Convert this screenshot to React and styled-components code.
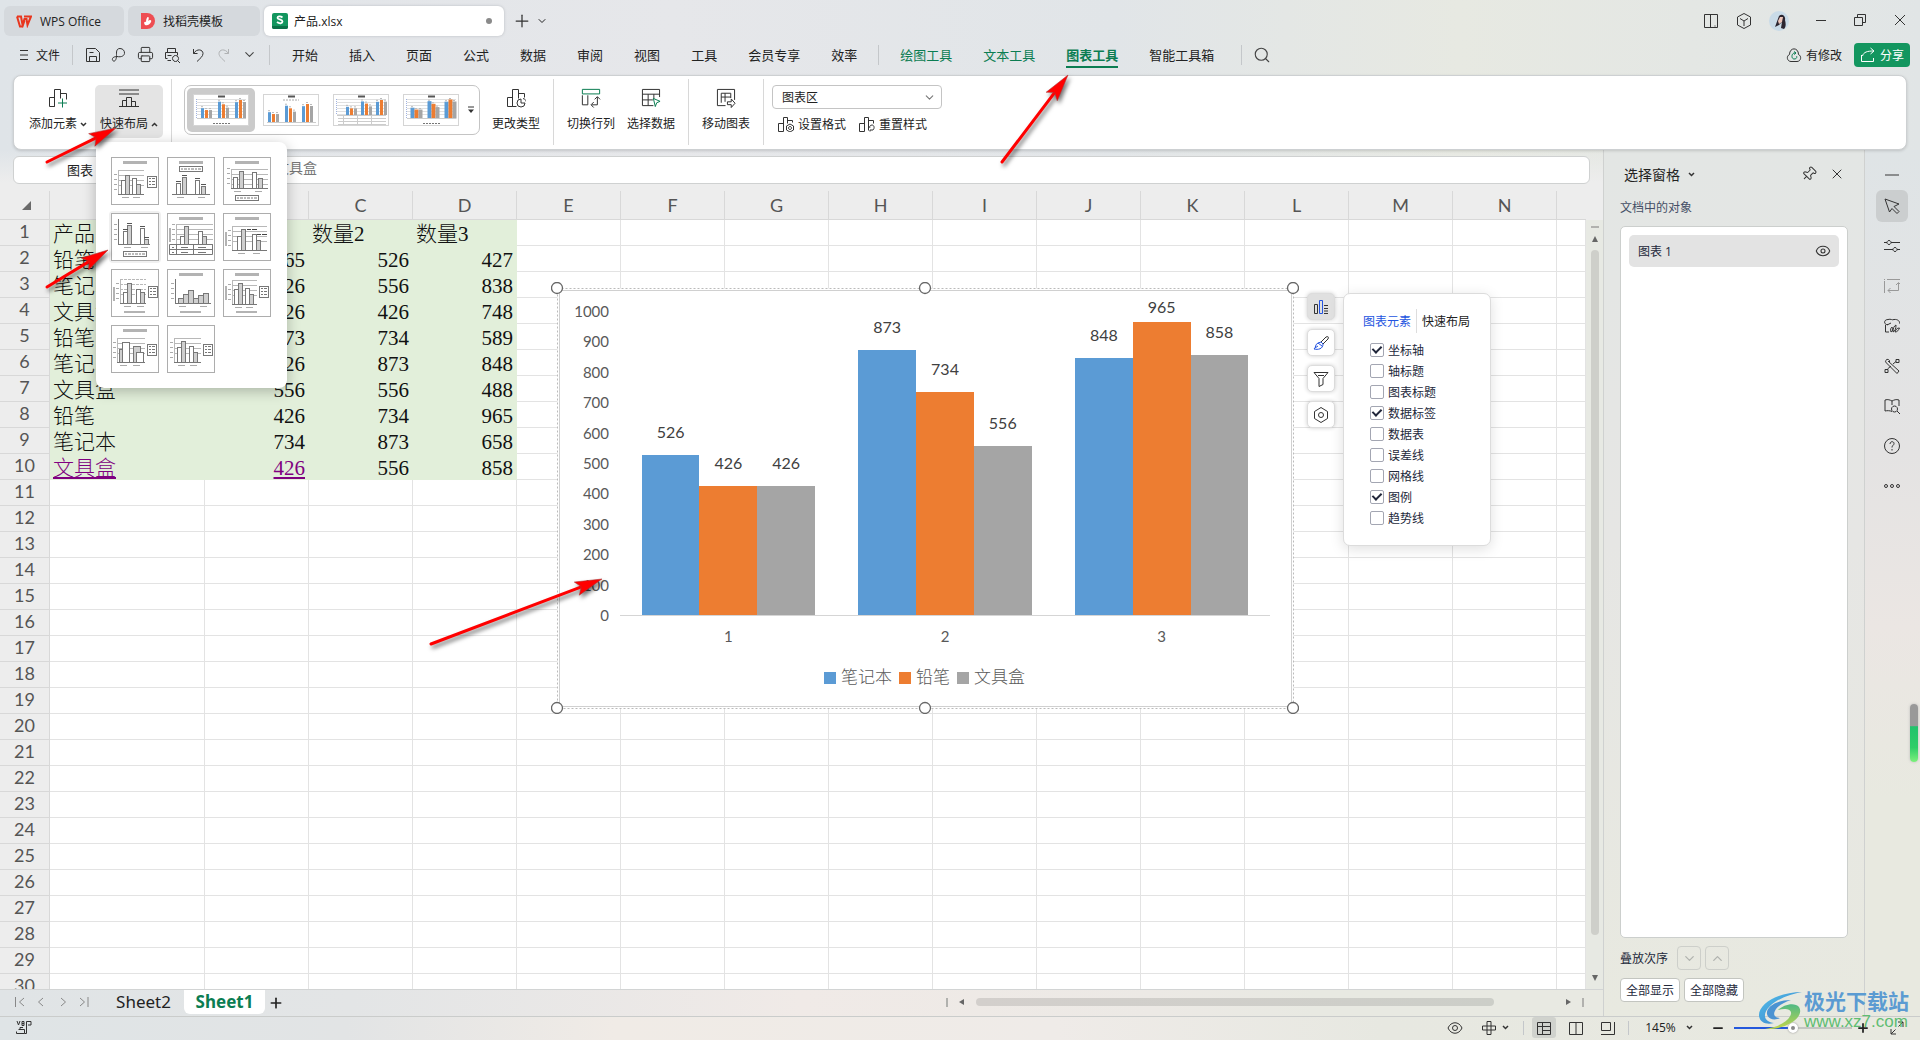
import React, { useState } from 'react'
import styled, { createGlobalStyle, css } from 'styled-components'
import { ChevronDown, ChevronUp, Minus, Plus, Search, X, Pin, Printer, Eye } from 'lucide-react'

const green = '#0b7d52'
const uiFont = '"Open Sans", "Noto Sans CJK SC", sans-serif'

const GlobalStyle = createGlobalStyle`
  * { box-sizing: border-box; }
  body { margin: 0; overflow: hidden; font-family: ${uiFont}; font-size: 12px; color: #222; }
  button, input, select { font: inherit; color: inherit; }
  svg { display: block; flex: none; }
`
const flexCenter = css`
  display: flex;
  align-items: center;
  justify-content: center;
`
const Page = styled.div`
  position: relative;
  display: flex;
  flex-direction: column;
  height: 100vh;
  background: linear-gradient(90deg, #dfe4e8, #e6e7ea 35%, #e1e5e8 58%, #e7e9e2 76%, #e1e5e6);
`
const Button = styled.button`
  ${flexCenter}
  flex: none;
  border: 0;
  padding: 0;
  background: none;
  white-space: nowrap;
`

/* title bar */
const TitleBar = styled.header`
  display: flex;
  align-items: center;
  height: 39px;
  padding: 6px 4px 3px;
  gap: 4px;
`
const FileTab = styled.button`
  display: flex;
  align-items: center;
  width: ${(props) => props.$width};
  height: 30px;
  gap: ${(props) => (props.$active ? '6px' : '8px')};
  border: 0;
  border-radius: 6px;
  padding: 0 ${(props) => (props.$active ? '12px 0 8px' : '12px')};
  background: ${(props) => (props.$active ? '#fff' : '#d5d9dd')};
  box-shadow: ${(props) => (props.$active ? '0 0 3px #b9bcc0' : 'none')};
`
const Dirty = styled.span`
  width: 6px;
  height: 6px;
  margin-left: auto;
  border-radius: 50%;
  background: #8a8a8a;
`
const NewTab = styled.div`
  ${flexCenter}
  gap: 4px;
  margin-left: 4px;
`
const WindowTools = styled.div`
  display: flex;
  align-items: center;
  margin-left: auto;
  padding-right: 10px;
  gap: 17px;
`

/* menu row */
const MenuBar = styled.nav`
  display: flex;
  align-items: center;
  height: 36px;
  padding: 0 10px 5px 19px;
`
const QuickTools = styled.div`
  display: flex;
  align-items: center;
  gap: 10px;
`
const FileButton = styled(Button)`
  gap: 7px;
`
const Rule = styled.span`
  flex: none;
  width: 1px;
  height: ${(props) => props.$height || '20px'};
  margin: ${(props) => props.$margin || '0'};
  background: ${(props) => props.$color || '#c4c7ca'};
`
const MenuItems = styled.div`
  display: flex;
  gap: 31px;
`
const MenuItem = styled(Button)`
  position: relative;
  height: 22px;
  font-size: 13px;
  font-weight: ${(props) => (props.$active ? 700 : 400)};
  color: ${(props) => (props.$green ? green : '#222')};
  ${(props) => props.$active && css`
    &::after {
      content: '';
      position: absolute;
      left: 0;
      right: 0;
      bottom: -2px;
      height: 2px;
      background: ${green};
    }
  `}
`
const SyncButton = styled(Button)`
  gap: 4px;
  margin: 0 12px 0 auto;
`
const ShareButton = styled(Button)`
  width: 56px;
  height: 24px;
  gap: 4px;
  border-radius: 4px;
  background: #13965f;
  color: #fff;
`

/* ribbon */
const Ribbon = styled.section`
  position: relative;
  z-index: 5;
  display: flex;
  align-items: flex-start;
  height: 75px;
  margin: 0 13px;
  padding: 9px 10px 0;
  border: 1px solid #cdd0d2;
  border-radius: 8px;
  background: #fff;
  box-shadow: 0 1px 3px rgba(0, 0, 0, 0.15);
`
const RibbonRule = styled(Rule)`
  height: 66px;
  margin: -6px ${(props) => props.$gap || '9px'} 0 9px;
  background: #d8d8d8;
`
const BigButton = styled(Button)`
  flex-direction: column;
  justify-content: flex-start;
  width: ${(props) => props.$width || '56px'};
  height: 53px;
  padding-top: 3px;
  gap: 8px;
  border-radius: 5px;
  background: ${(props) => (props.$active ? '#e4e4e4' : 'none')};
`
const Caption = styled.span`
  display: flex;
  align-items: center;
  gap: 3px;
  line-height: 16px;
`
const PickRow = styled.div`
  display: flex;
  gap: 4px;
`
const DropWrap = styled.div`
  position: relative;
  margin: 0 -1px 0 3px;
`
const LayoutMenu = styled.div`
  position: absolute;
  top: 57px;
  left: 1px;
  display: grid;
  grid-template-columns: repeat(3, 48px);
  gap: 8px;
  width: 191px;
  padding: 15px 15px 15px;
  border-radius: 8px;
  background: #fff;
  box-shadow: 0 3px 14px rgba(0, 0, 0, 0.25);
`
const LayoutTile = styled(Button)`
  width: 48px;
  height: 48px;
  border-radius: 2px;
  box-shadow: ${(props) => (props.$hover ? '0 0 0 2px #f0f0f0' : 'none')};
`
const LayoutMenuEnd = styled.div`
  height: 0;
`
const Gallery = styled.div`
  display: flex;
  align-items: center;
  width: 296px;
  height: 50px;
  margin: 0 8px 0 3px;
  padding: 2px;
  border: 1px solid #c4c4c4;
  border-radius: 7px;
`
const StyleTile = styled(Button)`
  width: 68px;
  height: 44px;
  margin-right: 2px;
  border-radius: 5px;
  background: ${(props) => (props.$active ? '#cbcbcb' : 'none')};
`
const FormatGroup = styled.div`
  display: flex;
  flex-direction: column;
  gap: 5px;
`
const SelectBox = styled.label`
  display: flex;
  align-items: center;
  width: 170px;
  height: 24px;
  padding: 0 5px 0 9px;
  border: 1px solid #c4c4c4;
  border-radius: 4px;
  select {
    flex: 1;
    appearance: none;
    border: 0;
    padding: 0;
    background: none;
  }
`
const SmallRow = styled.div`
  display: flex;
  gap: 13px;
  padding-left: 6px;
`
const SmallButton = styled(Button)`
  height: 20px;
  gap: 4px;
`

/* workspace */
const Workspace = styled.main`
  display: flex;
  flex: 1;
  min-height: 0;
`
const Book = styled.div`
  display: flex;
  flex: 1;
  flex-direction: column;
  min-width: 0;
`
const FormulaRow = styled.div`
  flex: none;
  height: 41px;
  padding: 6px 13px 7px;
  background: linear-gradient(transparent, #ededed 80%);
`
const FormulaBox = styled.div`
  display: flex;
  height: 28px;
  border: 1px solid #cfd1d1;
  border-radius: 6px;
  background: #fff;
`
const NameInput = styled.input`
  width: 261px;
  border: 0;
  padding: 0 0 2px 53px;
  background: none;
  font-size: 13px;
`
const FormulaInput = styled.input`
  flex: 1;
  border: 0;
  padding: 0 0 6px;
  background: none;
  color: #777;
  font-size: 14px;
`
const GridArea = styled.div`
  position: relative;
  display: flex;
  flex: 1;
  min-height: 0;
  overflow: hidden;
  border-bottom: 1px solid #d2d4d4;
  background: #ededed;
`
const SheetView = styled.div`
  flex: 1;
  min-width: 0;
  overflow: hidden;
`
const Table = styled.table`
  width: 100%;
  table-layout: fixed;
  border-collapse: separate;
  border-spacing: 0;
  background: #fff;
`
const HeadCell = styled.th`
  height: ${(props) => (props.$top ? '29px' : '26px')};
  padding: 0;
  border-right: 1px solid #d8d8d8;
  border-bottom: 1px solid #d8d8d8;
  background: #ededed;
  color: #555;
  font: 400 18px/22px Lato, sans-serif;
  ${(props) => props.$side && css`
    padding: 0 0 3px;
  `}
  &:last-child { border-right: ${(props) => (props.$top ? 0 : '1px solid #d8d8d8')}; }
`
const Cell = styled.td`
  height: 26px;
  padding: 2px 3px 0 3px;
  border-right: 1px solid ${(props) => (props.$filled ? '#e2efda' : '#e3e3e3')};
  border-bottom: 1px solid ${(props) => (props.$filled ? '#e2efda' : '#e3e3e3')};
  background: ${(props) => (props.$filled ? '#e2efda' : '#fff')};
  color: ${(props) => (props.$link ? '#800080' : '#111')};
  font: 21px/22px "Liberation Serif", "Noto Sans CJK SC", serif;
  font-weight: 300;
  text-align: ${(props) => (props.$num ? 'right' : 'left')};
  text-decoration: ${(props) => (props.$link ? 'underline 2px' : 'none')};
  text-underline-offset: 2px;
  white-space: nowrap;
`
const Corner = styled.span`
  display: block;
  width: 0;
  margin: 1px 0 0 22px;
  border-left: 9px solid transparent;
  border-bottom: 9px solid #6a6a6a;
`
const VScroll = styled.div`
  display: flex;
  flex-direction: column;
  align-items: center;
  width: 17px;
  margin-top: 29px;
  padding: 6px 0 7px;
  gap: 7px;
  background: #e7e9e3;
`
const Tick = styled.span`
  width: ${(props) => (props.$vertical ? '2px' : '8px')};
  height: ${(props) => (props.$vertical ? '9px' : '2px')};
  background: #b1b1ae;
`
const Thumb = styled.span`
  flex: 1;
  width: 8px;
  margin-bottom: 32px;
  border-radius: 4px;
  background: #cecfca;
`
const ChartFloat = styled.div`
  position: absolute;
  left: 551px;
  top: 91px;
`
const ChartTools = styled.div`
  position: absolute;
  left: 1307px;
  top: 102px;
  display: flex;
  flex-direction: column;
  gap: 9px;
`
const ChartTool = styled(Button)`
  width: 28px;
  height: 27px;
  border: 1px solid #ddd;
  border-radius: 5px;
  background: ${(props) => (props.$active ? '#e0e0e0' : '#fff')};
  box-shadow: 0 0 4px rgba(0, 0, 0, 0.2);
`
const ElementPanel = styled.div`
  position: absolute;
  left: 1343px;
  top: 102px;
  width: 148px;
  height: 253px;
  padding: 15px 19px;
  border: 1px solid #dcdcdc;
  border-radius: 7px;
  background: #fff;
  box-shadow: 0 3px 14px rgba(0, 0, 0, 0.13);
`
const PanelTabs = styled.div`
  display: flex;
  align-items: center;
  gap: 5px;
  margin-bottom: 6px;
`
const PanelTab = styled(Button)`
  color: ${(props) => (props.$active ? '#2454e0' : '#222')};
`
const CheckLabel = styled.label`
  display: flex;
  align-items: center;
  height: 21px;
  gap: 4px;
  padding-left: 7px;
  color: #23283a;
`
const Checkbox = styled.input.attrs({ type: 'checkbox' })`
  appearance: none;
  display: grid;
  place-content: center;
  width: 14px;
  height: 14px;
  margin: 0;
  border: 1px solid #a3a6b2;
  border-radius: 2px;
  background: #fff;
  &:checked::before {
    content: '';
    width: 4px;
    height: 7px;
    margin-top: -2px;
    border: solid #20263a;
    border-width: 0 2px 2px 0;
    transform: rotate(45deg);
  }
`
const SheetBar = styled.div`
  display: flex;
  align-items: center;
  flex: none;
  height: 26px;
  background: linear-gradient(90deg, #e0e4e6, #e3e5e6 22%, #f0eae7 50%, #ece9e5 72%, #e8e9e2 82%);
`
const SheetNav = styled.div`
  display: flex;
  width: 103px;
  padding: 0 0 2px 14px;
  gap: 9px;
`
const SheetTab = styled(Button)`
  align-self: flex-start;
  height: 24px;
  width: 81px;
  border-radius: 0 0 6px 6px;
  background: ${(props) => (props.$active ? '#fff' : 'none')};
  color: ${(props) => (props.$active ? green : '#222')};
  font: ${(props) => (props.$active ? 700 : 400)} 17px/22px "Noto Sans", sans-serif;
`
const HScroll = styled.div`
  display: flex;
  align-items: center;
  width: 657px;
  margin-left: auto;
  padding: 0 19px 2px 0;
  gap: 10px;
`
const HThumb = styled.span`
  flex: 1;
  height: 8px;
  margin-right: 60px;
  border-radius: 4px;
  background: linear-gradient(90deg, #d3cfcc, #cccec8);
`

/* selection pane */
const Pane = styled.aside`
  display: flex;
  flex-direction: column;
  width: 261px;
  padding: 12px 16px 14px 16px;
  border-left: 1px solid #cfd1d0;
  background: linear-gradient(#e3e6e4, #e6e6e4 45%, #e8e9e0);
`
const PaneTitle = styled.div`
  display: flex;
  align-items: center;
  height: 24px;
  padding: 0 3px 0 4px;
  gap: 8px;
  font-size: 14px;
`
const PaneTools = styled.div`
  display: flex;
  gap: 12px;
  margin-left: auto;
`
const PaneSub = styled.div`
  margin: 13px 0 9px;
  line-height: 18px;
  color: #454f66;
`
const ObjectList = styled.div`
  flex: 1;
  padding: 8px;
  border: 1px solid #cccfcd;
  border-radius: 5px;
  background: #fff;
`
const ObjectItem = styled.button`
  display: flex;
  align-items: center;
  justify-content: space-between;
  width: 100%;
  height: 32px;
  padding: 0 8px 0 9px;
  border: 0;
  border-radius: 5px;
  background: #e3e3e3;
  font-size: 12px;
  color: #23283a;
`
const PaneRow = styled.div`
  display: flex;
  align-items: center;
  gap: 4px;
  margin-top: 8px;
  color: #23283a;
`
const OrderButton = styled(Button)`
  width: 24px;
  height: 24px;
  border: 1px solid #cdcfca;
  border-radius: 4px;
  color: #b0b2ae;
`
const WhiteButton = styled(Button)`
  width: 60px;
  height: 24px;
  border: 1px solid #c3c5c0;
  border-radius: 4px;
  background: #fff;
`
const ToolRail = styled.aside`
  display: flex;
  flex-direction: column;
  align-items: center;
  width: 56px;
  padding: 24px 1px 0 0;
  border-left: 1px solid #cfd1d0;
  background: linear-gradient(#dfe4e6, #e4e3e3 35%, #ebe6e3 55%, #e8e9e0 75%);
`
const RailButton = styled(Button)`
  width: 32px;
  height: 32px;
  margin-top: 8px;
  border-radius: 6px;
  background: ${(props) => (props.$active ? '#cbcecf' : 'none')};
  &:first-of-type { margin-top: 14px; }
`
const Gauge = styled.span`
  position: absolute;
  right: 2px;
  top: 704px;
  width: 8px;
  height: 58px;
  border-radius: 4px;
  background: linear-gradient(#999 38%, #22c26c 39%, #2fce68 75%, #7df07c);
  box-shadow: 0 0 3px #bbb;
`

const StatusBar = styled.footer`
  display: flex;
  align-items: center;
  flex: none;
  height: 24px;
  padding: 0 11px 2px 16px;
  border-top: 1px solid #cacccb;
  background: linear-gradient(90deg, #dfe4e6, #e2e4e5 18%, #f0ebe6 32%, #efebe8 55%, #e7e8e1 72%, #e8e9e0);
`
const ViewTools = styled.div`
  display: flex;
  align-items: center;
  margin-left: auto;
`
const ViewButton = styled(Button)`
  width: ${(props) => props.$width || '24px'};
  height: 21px;
  gap: 5px;
  margin-right: ${(props) => props.$space || '8px'};
  border-radius: 3px;
  background: ${(props) => (props.$active ? '#d0d2cd' : 'none')};
`
const Zoom = styled(Button)`
  gap: 10px;
  width: 52px;
  margin-right: 16px;
`
const ZoomRange = styled.input.attrs({ type: 'range' })`
  appearance: none;
  width: 118px;
  height: 10px;
  margin: 0 4px 0 9px;
  background: linear-gradient(90deg, #2458dc 51%, #c3c5c1 51%) center / 100% 2px no-repeat;
  &::-webkit-slider-thumb {
    appearance: none;
    width: 10px;
    height: 10px;
    border: 3px solid #fff;
    border-radius: 50%;
    background: #888;
    box-shadow: 0 0 2px #888;
  }
`
const Watermark = styled.div`
  position: absolute;
  right: 11px;
  bottom: 6px;
  display: flex;
  align-items: center;
  gap: 0;
  pointer-events: none;
`
const MarkText = styled.div`
  color: #5b9bd2;
  font: 700 21px/24px "Noto Sans CJK SC", sans-serif;
  margin-bottom: 2px;
  span {
    display: block;
    color: #5fbd72;
    font: 17px/20px "Liberation Sans", sans-serif;
  }
`
const Arrows = styled.svg`
  position: absolute;
  inset: 0;
  z-index: 10;
  width: 100%;
  height: 100%;
  pointer-events: none;
  filter: drop-shadow(2px 3px 2px rgba(0, 0, 0, 0.55));
`

function Icon({ d, size = 16, box = 16, color = '#333', accent, accentColor = green, children }) {
  return (
    <svg width={size} height={size} viewBox={`0 0 ${box} ${box}`} fill="none" stroke={color} strokeWidth={box / size}>
      {d && <path d={d} />}
      {accent && <path d={accent} stroke={accentColor} />}
      {children}
    </svg>
  )
}

const Caret = ({ up }) => (
  <svg width="7" height="5" fill="none" stroke="#333" strokeWidth="1.5">
    <path d={up ? 'M1 4l2.5-2.5L6 4' : 'M1 1l2.5 2.5L6 1'} />
  </svg>
)
const Triangle = ({ dir }) => {
  const paths = { up: 'M1 7l3-6 3 6z', down: 'M1 1l3 6 3-6z', left: 'M6 1v6L1 4z', right: 'M2 1v6l5-3z' }
  return <svg width="8" height="8" fill="#666"><path d={paths[dir]} /></svg>
}

const icons = {
  save: 'M1.5 14.5v-13h9l4 4v9zM4.5 14.5v-5h7v5M4.5 5.5h4',
  pdf: 'M6 9.500c10 2 9-8 3-8-4 0-3.500 4-3.500 7 0 8-5 6-4 3 .5-1.500 3-2 4.500-2',
  preview: 'M3.500 5V1.500h8V5M7 13.500H3.500M3.500 11.500h-2v-6h12v3M3.500 8.500h4M14 14l2 2M11.500 8.500a3 3 0 1 0 .01 0',
  undo: 'M3.500 2v4.500h4M3.500 6.500C7 1 13 2.500 13 6.500c0 3-3 5-6 8',
  redo: 'M12.500 2v4.500h-4M12.500 6.500C9 1 3 2.500 3 6.500c0 3 3 5 6 8',
  addChart: 'M1.500 9.500v9h5v-9zM6.500 18.500v-17h6v9M12.500 5.500h6v6',
  layout: 'M0 2h20M0 6h20M0 18.500h20M3.500 18.500v-6h4v6M7.500 18.500v-9h5v9M12.500 13.500h4v5',
  typeChart: 'M1.500 9.500v9h5v-9zM6.500 18.500v-17h6v9M6.500 18.500h4M12.500 5.500h6v4',
  swap: 'M1.500 8v10.500h6V8M12 18.500h6V10M15 12.500l3-3 3 3M14 15.500l-3 3 3 3',
  data: 'M13 18.500H1.500v-17h18v8M1.500 6.500h18M1.500 12.500h11M7.500 6.500v12M13.500 6.500v5',
  move: 'M10 18.500H1.500v-17h18v11M5.500 15.500v-10h10v5M5.500 9.500h10M9.500 5.500v9M12 14.500h4v-3l4 4.500-4 4.500v-3h-4z',
  cursor: 'M1 1l14 5-5 2.500 5 5-2 2-5-5L5.500 14z',
  sliders: 'M0 4.500h3M7 4.500h9M0 11.500h9M13 11.500h3M5 2.500a2 2 0 1 0 .01 0M11 9.500a2 2 0 1 0 .01 0',
  swapRail: 'M.5 15V3M0 1.500h1M3 1.500h13M4 12.500h10.500V5M12 7l2.500-2.500L17 7M6.500 10L4 12.500 6.500 15',
  media: 'M4 6.500c-4 1-5-5 0-5 3-1 4 1 6 0 4-.5 6 2 5.500 4M1.500 7v7H5M3 7l4-2M7 14c-1-3 0-4 1-5 1 2 1 4-1 5M9 14c0-4 1-6 3-7 0 4-1 6-3 7M11 14c1-3 2-4 4.500-4-1 2-2 4-4.500 4',
  tools: 'M4 3l11 10-2 2.500L2.500 5a2 2 0 1 1 3 -1M1 11.500h3v3H1zM3.500 11L7 8M9 6l3-2.500M12 1.500h3v3h-3z',
  book: 'M8 13.500c-2-1-5-1-7-.500v-11c3-1 5 0 7 1 2-1 4-2 7-1v6M8 3v4M10.500 8a3 3 0 1 0 .01 0M13 13l3 3',
}

const Logo = ({ kind }) => {
  if (kind === 'wps') {
    return (
      <svg width="16" height="13" viewBox="0 0 16 13" fill="none" stroke="#e8361e" strokeWidth="2">
        <path d="M1 1.500h4l1.500 8L8.500 4h2l1 6L15 1.500H8M1 1.500L4 11.500h2.500l2-6" />
      </svg>
    )
  }
  if (kind === 'docer') {
    return (
      <svg width="15" height="16" viewBox="0 0 15 16">
        <path d="M1 0h6a8 8 0 0 1 0 16H1z" fill="#ee4d52" />
        <path d="M5 12c-2-3 0-4 1-3 0-3 1-5 2-5s1 2 0 4c2-2 4-1 3 1s-3 4-6 3z" fill="#fff" />
      </svg>
    )
  }
  return (
    <svg width="16" height="16" viewBox="0 0 16 16">
      <rect width="16" height="16" rx="2" fill="#13965f" />
      <path d="M0 13h16v1a2 2 0 0 1-2 2H2a2 2 0 0 1-2-2z" fill="#0b7048" />
      <path d="M10.500 4.500C8 2.500 5.500 3.500 5.500 5s5 1.500 5 3.500-3 2.500-5.500.500" stroke="#fff" strokeWidth="1.800" fill="none" />
    </svg>
  )
}

/* x, y, width, shaded - measured in the 48px tile */
const layouts = [
  { title: 1, grid: [7, 13, 33], base: 37, bars: [[10, 23, 4], [14, 18, 4, 1], [21, 21, 4], [25, 27, 4, 1]], legend: [36, 19] },
  { title: 1, base: 37, baseX: [5, 43], bars: [[9, 26, 4], [15, 20, 4, 1], [28, 23, 4], [34, 29, 4, 1]], keys: 9, labels: 1 },
  { title: 1, grid: [8, 12, 45], base: 31, bars: [[10, 20, 4], [16, 14, 4, 1], [29, 15, 4], [35, 21, 4, 1]], keys: 38 },
  { axis: 7, axisY: 6, base: 31, baseX: [7, 39], bars: [[12, 18, 4], [16, 12, 4, 1], [29, 15, 4], [33, 26, 4, 1]], keys: 38, labels: 1 },
  { title: 1, grid: [9, 11, 46], side: 15, base: 31, bars: [[13, 23, 4], [17, 13, 4, 1], [31, 18, 4], [35, 23, 4, 1]], table: 1 },
  { title: 1, grid: [9, 13, 44], side: 19, base: 37, bars: [[14, 23, 4], [18, 16, 4, 1], [29, 21, 4], [33, 27, 4, 1]], notes: 1 },
  { grid: [9, 10, 35], dashed: 1, side: 18, base: 34, bars: [[12, 23, 4], [16, 14, 4, 1], [25, 20, 4], [29, 23, 4, 1]], legend: [37, 17], foot: 1 },
  { title: 1, axis: 8, axisY: 10, base: 34, baseX: [8, 44], bars: [[11, 29, 5, 1], [16, 25, 5, 1], [21, 21, 5, 1], [26, 29, 5, 1], [31, 26, 5, 1], [36, 24, 5, 1]], foot: 1 },
  { title: 1, grid: [9, 11, 34], side: 17, base: 35, bars: [[11, 20, 4], [15, 14, 4, 1], [22, 19, 4], [26, 25, 4, 1]], legend: [36, 17], foot: 1 },
  { title: 1, grid: [6, 13, 34], base: 37, bars: [[8, 24, 4, 1], [11, 17, 7], [22, 21, 7, 1], [25, 27, 7]], legend: [36, 19] },
  { grid: [7, 13, 34], base: 37, bars: [[10, 22, 4], [14, 16, 4, 1], [22, 21, 4], [26, 27, 4, 1]], legend: [36, 19] },
]

function LayoutIcon({ item }) {
  const { grid, bars, base, legend } = item
  const first = bars[0][0]
  const last = bars[bars.length - 1][0]
  const [bx1, bx2] = item.baseX || [grid[0], grid[2]]
  const rows = grid ? [0, 1, 2, 3].map((i) => grid[1] + 0.5 + i * 5) : []
  return (
    <svg width="48" height="48" fill="none" stroke="#777">
      <rect x=".5" y=".5" width="47" height="47" fill="#fff" stroke="#adadad" />
      {item.title && <rect x="12" y="4" width="24" height="3" fill="#b3b3b3" stroke="none" />}
      {rows.map((y) => <path key={y} d={`M${grid[0]} ${y}H${grid[2]}`} stroke="#b8b8b8" strokeDasharray={item.dashed ? '3 1' : 'none'} />)}
      {grid && <path d={`M${grid[0] + 0.5} ${grid[1]}V${base}`} stroke="#b8b8b8" />}
      {item.axis && <path d={`M${item.axis + 0.5} ${item.axisY}V${base}`} />}
      {(grid || item.axis) && [4, 9, 14, 19].map((o) => (
        <path key={o} d={`M${bx1 - 4} ${base - o - 0.5}h3`} stroke="#aaa" />
      ))}
      {item.side && <rect x="2" y={item.side} width="2" height="14" fill="#b3b3b3" stroke="none" />}
      {bars.map(([x, y, w, dark]) => (
        <rect key={x} x={x + 0.5} y={y + 0.5} width={w} height={base - y} fill={dark ? '#cfcfcf' : '#fff'} />
      ))}
      {item.labels && bars.map(([x, y]) => <path key={x} d={`M${x} ${y - 1.5}h5`} stroke="#555" />)}
      {item.notes && <path d="M24 16.500h4M29 16.500h5M34 21.500h4M39 21.500h5" stroke="#444" />}
      <path d={`M${bx1} ${base + 0.5}H${bx2}`} />
      {!item.table && <path d={`M${first + 1} ${base + 3.5}h7M${last - 3} ${base + 3.5}h7`} stroke="#aaa" />}
      {item.table && <path d="M2.500 31.500h43v10h-43zM2.500 36.500h43M9.500 31.500v10M26.500 31.500v10M5 34.500h2M5 39.500h2M14 34.500h7M31 34.500h8M14 39.500h7M31 39.500h8" fill="#fff" />}
      {item.foot && <rect x="13" y="42" width="21" height="2" fill="#b3b3b3" stroke="none" />}
      {item.keys && (
        <g>
          <rect x="12.500" y={item.keys + 0.5} width="23" height="5" fill="#fff" />
          <path d={`M14 ${item.keys + 3}h20`} strokeDasharray="2 1 3 1" />
        </g>
      )}
      {legend && (
        <g>
          <rect x={legend[0] + 0.5} y={legend[1] + 0.5} width="9" height="11" fill="#fff" />
          {[2, 5, 8].map((o) => <path key={o} d={`M${legend[0] + 2} ${legend[1] + o + 0.5}h2m1 0h3`} />)}
        </g>
      )}
    </svg>
  )
}

const series = [
  { name: '笔记本', color: '#5b9bd5', values: [526, 873, 848], keyX: 273 },
  { name: '铅笔', color: '#ed7d31', values: [426, 734, 965], keyX: 348 },
  { name: '文具盒', color: '#a5a5a5', values: [426, 556, 858], keyX: 406 },
]

function StyleThumb({ kind }) {
  const base = [24, 28, 21, 24][kind]
  const scale = [18, 18, 15, 18][kind] / 965
  const left = kind === 1 ? 5 : kind === 2 ? 13 : 8
  const step = kind === 2 ? 15 : 17
  return (
    <svg width="56" height="32" fill="none">
      <rect x=".5" y=".5" width="55" height="31" fill="#fff" stroke="#d5d5d5" />
      <path d="M25 2.500h7" stroke="#555" strokeWidth="2" />
      {kind === 1 ? <path d="M20 6h16" stroke="#aaa" strokeDasharray="2 1" /> : (
        [5, 8, 11, 14, 17, 20].map((y) => <path key={y} d={`M4 ${y + 0.5}h49`} stroke="#e0e0e0" />)
      )}
      {kind !== 1 && <path d={`M3.500 5v${base - 5}`} stroke="#9fb2e0" strokeDasharray="1 1" />}
      {series.map((s, i) => s.values.map((v, g) => (
        <g key={s.name + g}>
          <rect x={left + g * step + i * 4} y={base - v * scale} width={3} height={v * scale} fill={s.color} stroke={kind === 3 ? s.color : 'none'} />
          <path d={`M${left + g * step + i * 4} ${base - v * scale - 1.5}h2`} stroke="#bbb" />
        </g>
      )))}
      <path d={`M4 ${base + 0.5}h49`} stroke="#ccc" />
      {kind === 2 && <path d="M5 24.500h48M5 27.500h48M5 30.500h48M10.500 22v9M24.500 22v9M38.500 22v9" stroke="#ccc" />}
      {(kind === 0 || kind === 3) && <path d="M20 29.500h17" stroke="#777" strokeDasharray="2 1" />}
    </svg>
  )
}

function Chart() {
  const base = 333
  const unit = 0.3036
  const group = 650 / 3
  const bar = group / 3.75
  const font = 'Lato, "Noto Sans CJK SC", sans-serif'
  return (
    <svg width="748" height="432" fontFamily={font} fill="#595959">
      <rect x="6.500" y="6.500" width="736" height="420" fill="#fff" stroke="#bbb" strokeDasharray="2 2" />
      <rect x="8.500" y="8.500" width="732" height="416" fill="#fff" stroke="#d0d0d0" />
      {[...Array(11)].map((_, i) => (
        <text key={i} x="58" y={339 - i * 30.4} fontSize="15" textAnchor="end">{i * 100}</text>
      ))}
      {series.map((s, i) => s.values.map((v, g) => {
        const x = 69 + g * group + group / 2 + (i - 1.5) * bar
        return (
          <g key={s.name + g}>
            <rect x={Math.round(x)} y={Math.round(base - v * unit)} width={Math.round(x + bar) - Math.round(x)} height={Math.round(v * unit)} fill={s.color} />
            <text x={x + bar / 2} y={Math.max(31, base - v * unit - 17)} fontSize="16" textAnchor="middle" fill="#404040">{v}</text>
          </g>
        )
      }))}
      <path d="M69 333.500h650" stroke="#d5d5d5" />
      {[1, 2, 3].map((n) => (
        <text key={n} x={69 + group * (n - 0.5)} y="360" fontSize="15" textAnchor="middle">{n}</text>
      ))}
      {series.map((s) => (
        <g key={s.name}>
          <rect x={s.keyX} y="390" width="12" height="12" fill={s.color} />
          <text x={s.keyX + 17} y="401" fontSize="17" fontWeight="300">{s.name}</text>
        </g>
      ))}
      {[[6, 6], [374, 6], [742, 6], [6, 426], [374, 426], [742, 426]].map(([x, y]) => (
        <circle key={`${x}-${y}`} cx={x} cy={y} r="5.500" fill="#fff" stroke="#666" strokeWidth="1.300" />
      ))}
    </svg>
  )
}

const columns = 'ABCDEFGHIJKLMN'.split('')
const rows = [
  ['产品', '数量1', '数量2', '数量3'],
  ['铅笔', 965, 526, 427],
  ['笔记本', 526, 556, 838],
  ['文具盒', 426, 426, 748],
  ['铅笔', 873, 734, 589],
  ['笔记本', 526, 873, 848],
  ['文具盒', 556, 556, 488],
  ['铅笔', 426, 734, 965],
  ['笔记本', 734, 873, 658],
  ['文具盒', 426, 556, 858],
]

function Sheet() {
  return (
    <Table>
      <colgroup>
        <col style={{ width: 50 }} />
        {columns.map((c, i) => <col key={c} style={{ width: i === 0 ? 155 : 104 }} />)}
        <col />
      </colgroup>
      <thead>
        <tr>
          <HeadCell $top><Corner /></HeadCell>
          {columns.map((c) => <HeadCell $top key={c}>{c}</HeadCell>)}
          <HeadCell $top />
        </tr>
      </thead>
      <tbody>
        {[...Array(30)].map((_, r) => (
          <tr key={r}>
            <HeadCell as="th" scope="row" $side>{r + 1}</HeadCell>
            {[...Array(15)].map((_, c) => {
              const value = rows[r] && rows[r][c]
              return (
                <Cell key={c} $filled={r < 10 && c < 4} $num={typeof value === 'number'} $link={r === 9 && c < 2}>
                  {value}
                </Cell>
              )
            })}
          </tr>
        ))}
      </tbody>
    </Table>
  )
}

const elements = ['坐标轴', '轴标题', '图表标题', '数据标签', '数据表', '误差线', '网格线', '图例', '趋势线']

function ChartElements() {
  const [checked, setChecked] = useState(['坐标轴', '数据标签', '图例'])
  const toggle = (name) => {
    setChecked(checked.includes(name) ? checked.filter((n) => n !== name) : [...checked, name])
  }
  return (
    <ElementPanel>
      <PanelTabs>
        <PanelTab $active>图表元素</PanelTab>
        <Rule $height="24px" $color="#ddd" />
        <PanelTab>快速布局</PanelTab>
      </PanelTabs>
      {elements.map((name) => (
        <CheckLabel key={name}>
          <Checkbox checked={checked.includes(name)} onChange={() => toggle(name)} />
          {name}
        </CheckLabel>
      ))}
    </ElementPanel>
  )
}

const Arrow = ({ from, to }) => {
  const [x1, y1] = from
  const [x2, y2] = to
  const length = Math.hypot(x2 - x1, y2 - y1)
  const angle = Math.atan2(y2 - y1, x2 - x1) * 180 / Math.PI
  return (
    <g transform={`translate(${x2} ${y2}) rotate(${angle})`}>
      <path d={`M${-length} 0H-20`} stroke="#f00" strokeWidth="3" strokeLinecap="round" />
      <path d="M0 0L-27 -7L-22 0L-27 7Z" fill="#f00" stroke="#a33" strokeWidth=".5" />
    </g>
  )
}

const menus = ['开始', '插入', '页面', '公式', '数据', '审阅', '视图', '工具', '会员专享', '效率']
const toolMenus = ['绘图工具', '文本工具', '图表工具', '智能工具箱']

function Header() {
  return (
    <>
      <TitleBar>
        <FileTab $width="120px"><Logo kind="wps" />WPS Office</FileTab>
        <FileTab $width="132px"><Logo kind="docer" />找稻壳模板</FileTab>
        <FileTab $width="240px" $active><Logo />产品.xlsx<Dirty /></FileTab>
        <NewTab>
          <Button aria-label="新建"><Plus size={20} strokeWidth={1.5} color="#333" /></Button>
          <Button aria-label="标签列表"><ChevronDown size={12} /></Button>
        </NewTab>
        <WindowTools>
          <Button aria-label="分屏"><Icon d="M1.500 1.500h13v13h-13zM7.500 1.500v13M12 12.500v1" /></Button>
          <Button aria-label="工作台"><Icon d="M8 .5l6.500 3.500v8L8 15.500 1.500 12V4zM4 5.500l4 2.500 4-2.500M8 8v5" /></Button>
          <Button aria-label="账户">
            <svg width="20" height="20" viewBox="0 0 20 20">
              <circle cx="10" cy="10" r="10" fill="#c9dbe8" />
              <path d="M10 5c3-3 7 0 6 4 1 4 1 7-1 9l-3-1 1-6-3 3-4 2z" fill="#2b2530" />
              <path d="M11 6l3 0-1 5-3 2-1-3z" fill="#edc6bb" />
            </svg>
          </Button>
          <Button aria-label="最小化"><Icon size={22} box={22} d="M10 10.500h10" /></Button>
          <Button aria-label="还原"><Icon size={22} box={22} d="M9.500 7.500h8v8h-8zM12.500 7V4.500h8v8H18" /></Button>
          <Button aria-label="关闭"><Icon size={22} box={22} d="M11 5l10 10M21 5L11 15" /></Button>
        </WindowTools>
      </TitleBar>
      <MenuBar>
        <FileButton><Icon size={10} box={10} d="M1 .5h8M1 5h8M1 9.500h8" />文件</FileButton>
        <Rule $margin="0 12px" />
        <QuickTools>
          <Button aria-label="保存"><Icon d={icons.save} /></Button>
          <Button aria-label="输出PDF"><Icon d={icons.pdf} /></Button>
          <Button aria-label="打印"><Printer size={17} strokeWidth={1.4} color="#333" /></Button>
          <Button aria-label="打印预览"><Icon d={icons.preview} /></Button>
          <Button aria-label="撤销"><Icon d={icons.undo} /></Button>
          <Button aria-label="恢复"><Icon d={icons.redo} color="#b0b2b4" /></Button>
          <Button aria-label="更多"><ChevronDown size={15} strokeWidth={1.7} color="#444" /></Button>
        </QuickTools>
        <Rule $margin="0 22px 0 12px" />
        <MenuItems>{menus.map((m) => <MenuItem key={m}>{m}</MenuItem>)}</MenuItems>
        <Rule $margin="0 21px" />
        <MenuItems>
          {toolMenus.map((m, i) => <MenuItem key={m} $green={i < 3} $active={i === 2}>{m}</MenuItem>)}
        </MenuItems>
        <Rule $margin="0 11px 0 27px" />
        <Button aria-label="搜索"><Search size={18} strokeWidth={1.5} color="#444" /></Button>
        <SyncButton>
          <Icon d="M5 14.500C1 14.500 0 9 3.500 7.500 3.500 0 12.500 0 12.500 7.500 16 9 15 14.500 11 14.500z" accent="M8 4.500l2 1.500-2 1.500M10 6c-5-1-5 6-2 6s3-2 2.500-3" />
          有修改
        </SyncButton>
        <ShareButton>
          <Icon color="#fff" d="M1.500 8v6.500h12V11M2.500 9c1-4 5-5 11-5M10.500 1l3.500 3-3.500 3" />
          分享
        </ShareButton>
      </MenuBar>
    </>
  )
}

function Toolbar() {
  return (
    <Ribbon>
      <BigButton $width="68px">
        <Icon size={20} box={20} d={icons.addChart} accent="M10 15h9M14.500 10.500v9" />
        <Caption>添加元素 <Caret /></Caption>
      </BigButton>
      <DropWrap>
        <BigButton $width="68px" $active>
          <Icon size={20} box={20} d={icons.layout} />
          <Caption>快速布局 <Caret up /></Caption>
        </BigButton>
        <LayoutMenu>
          {layouts.map((item, i) => (
            <LayoutTile key={i} $hover={i === 3} aria-label={`布局 ${i + 1}`}><LayoutIcon item={item} /></LayoutTile>
          ))}
          <LayoutMenuEnd />
        </LayoutMenu>
      </DropWrap>
      <RibbonRule />
      <Gallery>
        {[0, 1, 2, 3].map((k) => (
          <StyleTile key={k} $active={k === 0} aria-label={`样式 ${k + 1}`}><StyleThumb kind={k} /></StyleTile>
        ))}
        <Button aria-label="更多样式">
          <svg width="8" height="8"><path d="M1 1h6" stroke="#333" /><path d="M1 3.500h6L4 7z" fill="#333" /></svg>
        </Button>
      </Gallery>
      <BigButton>
        <Icon size={20} box={20} d={icons.typeChart}><path d="M15 11a4 4 0 1 0 4 4h-4zM17 10.500c2 .5 3 1.500 3 3" /></Icon>
        <Caption>更改类型</Caption>
      </BigButton>
      <RibbonRule />
      <PickRow>
        <BigButton>
          <Icon size={20} box={22} d={icons.swap} accent="M1.500 1.500h19v5h-19z" />
          <Caption>切换行列</Caption>
        </BigButton>
        <BigButton>
          <Icon size={20} box={21} d={icons.data} accent="M13 11l7 3-3.500 1.500L15 19.500z" />
          <Caption>选择数据</Caption>
        </BigButton>
      </PickRow>
      <RibbonRule />
      <BigButton>
        <Icon size={20} box={21} d={icons.move} />
        <Caption>移动图表</Caption>
      </BigButton>
      <RibbonRule $gap="8px" />
      <FormatGroup>
        <SelectBox>
          <select aria-label="图表区域"><option>图表区</option></select>
          <ChevronDown size={13} strokeWidth={2} color="#777" />
        </SelectBox>
        <SmallRow>
          <SmallButton>
            <Icon d="M.5 7.500v8h5v-8zM5.500 15V1.500h4v6M9.500 4.500h5v2M12 8l3.500 2v4L12 16l-3.500-2v-4zM12 10.500a1.500 1.500 0 1 0 .01 0" />
            设置格式
          </SmallButton>
          <SmallButton>
            <Icon d="M.5 7.500v8h5v-8zM5.500 15V1.500h4v13M9.500 4.500h5v3M11 15.500V14h3c2-2 1-5-1-5s-3 2-2 3" />
            重置样式
          </SmallButton>
        </SmallRow>
      </FormatGroup>
    </Ribbon>
  )
}

function SelectionPane() {
  return (
    <Pane>
      <PaneTitle>
        选择窗格 <Caret />
        <PaneTools>
          <Button aria-label="固定窗格"><Pin size={16} strokeWidth={1.5} color="#333" transform="rotate(45)" /></Button>
          <Button aria-label="关闭窗格"><X size={16} strokeWidth={1.5} color="#333" /></Button>
        </PaneTools>
      </PaneTitle>
      <PaneSub>文档中的对象</PaneSub>
      <ObjectList>
        <ObjectItem>图表 1 <Eye size={16} strokeWidth={1.6} color="#333" /></ObjectItem>
      </ObjectList>
      <PaneRow>
        叠放次序
        <Rule $height="1px" $color="none" />
        <OrderButton aria-label="下移"><ChevronDown size={15} /></OrderButton>
        <OrderButton aria-label="上移"><ChevronUp size={15} /></OrderButton>
      </PaneRow>
      <PaneRow>
        <WhiteButton>全部显示</WhiteButton>
        <WhiteButton>全部隐藏</WhiteButton>
      </PaneRow>
    </Pane>
  )
}

function Rail() {
  return (
    <ToolRail>
      <svg width="14" height="2"><path d="M0 1h14" stroke="#8b8d8e" strokeWidth="2" /></svg>
      <RailButton $active aria-label="选择"><Icon d={icons.cursor} /></RailButton>
      <RailButton aria-label="属性"><Icon d={icons.sliders} /></RailButton>
      <RailButton aria-label="转换"><Icon d={icons.swapRail} color="#999" /></RailButton>
      <RailButton aria-label="素材"><Icon d={icons.media} /></RailButton>
      <RailButton aria-label="工具"><Icon d={icons.tools} /></RailButton>
      <RailButton aria-label="查阅"><Icon d={icons.book} /></RailButton>
      <RailButton aria-label="帮助">
        <Icon d="M6 6c0-3 4-3 4-.5C10 7.500 8 7 8 9.500M8 11v1.500"><circle cx="8" cy="8" r="7.500" /></Icon>
      </RailButton>
      <RailButton aria-label="更多">
        <Icon>{[2, 8, 14].map((x) => <circle key={x} cx={x} cy="8" r="1.500" />)}</Icon>
      </RailButton>
    </ToolRail>
  )
}

const App = () => {
  const [zoom, setZoom] = useState(145)
  return (
    <Page>
      <GlobalStyle />
      <Header />
      <Toolbar />
      <Workspace>
        <Book>
          <FormulaRow>
            <FormulaBox>
              <NameInput aria-label="名称框" defaultValue="图表 1" />
              <FormulaInput aria-label="编辑栏" defaultValue="文具盒" />
            </FormulaBox>
          </FormulaRow>
          <GridArea>
            <SheetView><Sheet /></SheetView>
            <VScroll><Tick /><Triangle dir="up" /><Thumb /><Triangle dir="down" /></VScroll>
            <ChartFloat><Chart /></ChartFloat>
            <ChartTools>
              <ChartTool $active aria-label="图表元素">
                <Icon d="M1.500 5.500h3v9h-3zM11 6.500h4M11 9.500h4M11 12h4M11 14.500h4" accent="M6.500 1.500h3v13h-3z" accentColor="#2454e0" />
              </ChartTool>
              <ChartTool aria-label="图表样式">
                <Icon d="M8 7l5-5c2-1 3 0 2 2l-5 5" accent="M1 14c2-1 1-5 4-6l3-1 2 2c0 5-5 6-9 5zM5 8l4 3M2 13l3-2" accentColor="#2454e0" />
              </ChartTool>
              <ChartTool aria-label="筛选"><Icon d="M1 1.500h14l-5 6v6l-4 2v-8zM5 4.500h6" /></ChartTool>
              <ChartTool aria-label="设置"><Icon d="M8 .5l6.500 4v7L8 15.500l-6.500-4v-7z"><circle cx="8" cy="8" r="2.500" /></Icon></ChartTool>
            </ChartTools>
            <ChartElements />
          </GridArea>
          <SheetBar>
            <SheetNav>
              <Icon size={12} box={12} color="#888" d="M1.500 1v10M10 2L5.500 6l4.500 4" />
              <Icon size={12} box={12} color="#888" d="M8 2L3.500 6 8 10" />
              <Icon size={12} box={12} color="#888" d="M5 2l4.500 4L5 10" />
              <Icon size={12} box={12} color="#888" d="M3 2l4.500 4L3 10M11 1v10" />
            </SheetNav>
            <SheetTab>Sheet2</SheetTab>
            <SheetTab $active>Sheet1</SheetTab>
            <Button aria-label="新建工作表"><Rule $height="1px" $margin="0 2px 0 0" $color="none" /><Plus size={16} strokeWidth={2.5} /></Button>
            <HScroll>
              <Tick $vertical /><Triangle dir="left" /><HThumb /><Triangle dir="right" /><Tick $vertical />
            </HScroll>
          </SheetBar>
        </Book>
        <SelectionPane />
        <Rail />
      </Workspace>
      <StatusBar>
        <Icon d="M1 1l1.500 4L4 1M6 5.500v-4h2v4zM6 3.500h2M10.500 12V1.500H15V5h-3M2.500 9.500h6v4h-8v-2M4 9.500v-2h3M10.500 11.500v2H8.500" />
        <ViewTools>
          <ViewButton $space="14px" aria-label="护眼"><Icon d="M1 8c3-7 11-7 14 0-3 7-11 7-14 0z"><circle cx="8" cy="8" r="2.500" /></Icon></ViewButton>
          <ViewButton $width="28px" $space="14px" aria-label="定位">
            <Icon d="M6 1.500h4V6h4.500v4H10v4.500H6V10H1.500V6H6zM6 6h4v4H6z" /><Caret />
          </ViewButton>
          <Rule $height="14px" $margin="0 8px 0 0" />
          <ViewButton $active aria-label="普通视图"><Icon d="M1.500 2.500h13v12h-13zM1.500 6.500h13M6.500 2.500v12M6.500 10.500h8" /></ViewButton>
          <ViewButton aria-label="分页预览"><Icon d="M1.500 2.500h13v12h-13zM8 2.500v12" /></ViewButton>
          <ViewButton aria-label="页面布局"><Icon d="M1.500 2.500h9v8h-9zM14.500 2v12.500H1" /></ViewButton>
          <Rule $height="14px" $margin="0 14px 0 0" />
          <Zoom>{zoom}% <Caret /></Zoom>
          <Button aria-label="缩小"><Minus size={14} strokeWidth={3} /></Button>
          <ZoomRange aria-label="缩放" min={10} max={280} value={zoom} onChange={(e) => setZoom(Number(e.target.value))} />
          <Button aria-label="放大"><Plus size={14} strokeWidth={3} /></Button>
          <Rule $height="1px" $margin="0 0 0 14px" $color="none" />
          <ViewButton $space="0" aria-label="全屏"><Icon d="M9 2h5v5M14 2L9.500 6.500M7 14H2V9M2 14l4.500-4.500" /></ViewButton>
        </ViewTools>
      </StatusBar>
      <Gauge />
      <Watermark>
        <svg width="46" height="42" viewBox="0 0 46 42">
          <defs>
            <linearGradient id="swoosh" x2="1" y2="1">
              <stop offset="0" stopColor="#4fc0ec" />
              <stop offset="1" stopColor="#3f7dc6" />
            </linearGradient>
            <linearGradient id="leaf" x2="0" y2="1">
              <stop offset="0" stopColor="#4fb985" />
              <stop offset="1" stopColor="#c0d64c" />
            </linearGradient>
          </defs>
          <path d="M44 2C20 2 0 14 1 26c1 7 8 9 15 7C7 32 3 25 12 16 20 8 34 4 44 2z" fill="url(#swoosh)" />
          <path d="M33 10C18 10 8 17 9 24c1 5 7 7 13 4-5 0-8-3-4-9 3-4 9-7 15-9z" fill="#4b93d2" />
          <path d="M20 20c6-6 17-8 21-3 6 9-11 23-34 22 14-2 24-8 26-15 1-5-6-6-13-4z" fill="url(#leaf)" />
        </svg>
        <MarkText>极光下载站<span>www.xz7.com</span></MarkText>
      </Watermark>
      <Arrows>
        <Arrow from={[47, 162]} to={[116, 128]} />
        <Arrow from={[47, 287]} to={[108, 250]} />
        <Arrow from={[1002, 162]} to={[1068, 75]} />
        <Arrow from={[431, 644]} to={[602, 579]} />
      </Arrows>
    </Page>
  )
}

export default App
